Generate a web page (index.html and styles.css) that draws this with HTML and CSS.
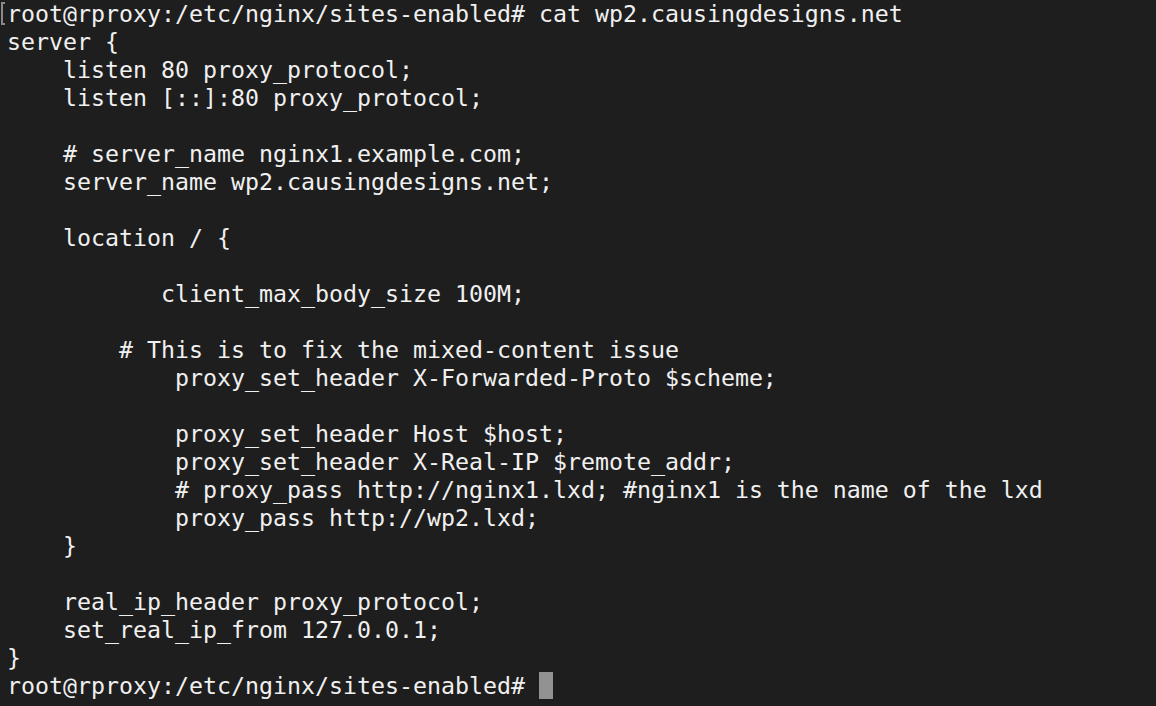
FILE: index.html
```html
<!DOCTYPE html>
<html>
<head>
<meta charset="utf-8">
<link rel="stylesheet" href="styles.css">
</head>
<body>
<pre class="term"><span class="mark"></span>root@rproxy:/etc/nginx/sites-enabled# cat wp2.causingdesigns.net
server {
    listen 80 proxy_protocol;
    listen [::]:80 proxy_protocol;

    # server_name nginx1.example.com;
    server_name wp2.causingdesigns.net;

    location / {

           client_max_body_size 100M;

        # This is to fix the mixed-content issue
            proxy_set_header X-Forwarded-Proto $scheme;

            proxy_set_header Host $host;
            proxy_set_header X-Real-IP $remote_addr;
            # proxy_pass http://nginx1.lxd; #nginx1 is the name of the lxd
            proxy_pass http://wp2.lxd;
    }

    real_ip_header proxy_protocol;
    set_real_ip_from 127.0.0.1;
}
root@rproxy:/etc/nginx/sites-enabled# <span class="cursor"> </span></pre>
</body>
</html>
```
FILE: styles.css
```css
html, body {
  margin: 0;
  padding: 0;
  background: #1e1e1e;
  width: 1156px;
  height: 706px;
  overflow: hidden;
}
.term {
  margin: 0;
  padding: 0 0 0 7px;
  font-family: "DejaVu Sans Mono", "Liberation Mono", monospace;
  font-size: 23.25px;
  line-height: 28px;
  color: #f0f0f0;
  white-space: pre;
}
.mark {
  display: inline-block;
  box-sizing: border-box;
  width: 4px;
  height: 23px;
  margin-left: -6px;
  margin-right: 2px;
  margin-top: 2px;
  vertical-align: top;
  border-left: 2px solid #8a8a8a;
  border-top: 2px solid #8a8a8a;
  border-bottom: 2px solid #8a8a8a;
}
.cursor {
  display: inline-block;
  width: 14px;
  height: 27px;
  vertical-align: top;
  background: #929292;
}
```
